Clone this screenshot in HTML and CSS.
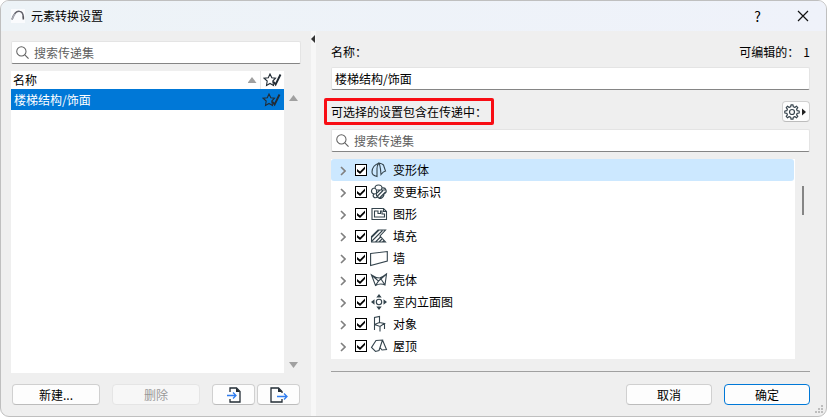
FILE: index.html
```
<!DOCTYPE html>
<html lang="zh-CN">
<head>
<meta charset="utf-8">
<title>元素转换设置</title>
<link rel="stylesheet" href="styles.css">
</head>
<body>
<svg class="defs" aria-hidden="true">
  <symbol id="search" viewBox="0 0 14 14"><circle cx="5.8" cy="5.8" r="5" fill="none" stroke="currentColor" stroke-width="1.1"/><path d="M9.5 9.5l4 4" stroke="currentColor" stroke-width="1.2"/></symbol>
  <symbol id="starcheck" viewBox="0 0 19 14"><path d="M7 1l1.8 3.8 3.7.4-2.7 2.8.7 4.4L7 10.5l-3.5 1.9.7-4.4L1 5.2l4.3-.5z" fill="none" stroke="currentColor" stroke-width="1.1"/><path d="M10.2 8.5l2.4 3L17.5 1.5" fill="none" stroke="currentColor" stroke-width="1.9"/></symbol>
  <symbol id="chevron" viewBox="0 0 6 10"><path d="M1 1l4 4-4 4" fill="none" stroke="currentColor" stroke-width="1.6"/></symbol>
</svg>
<main class="dialog">
  <header class="titlebar">
    <svg class="logo" viewBox="0 0 14 14"><path d="M1 10.500C3 4 6 1.800 8.500 2.200C11.500 2.600 12.200 5 12.300 8.500" fill="none" stroke="#63636c" stroke-width="1.500"/><path d="M1 10.500C2 8 3 6 4 5" fill="none" stroke="#a7a9b2" stroke-width="1.600"/><path d="M12.300 7.500v3" stroke="#54545c" stroke-width="1.600"/></svg>
    <h1>元素转换设置</h1>
    <button class="winbtn" type="button" aria-label="帮助">?</button>
    <button class="winbtn" type="button" aria-label="关闭"><svg viewBox="0 0 12 12" width="12" height="12"><path d="M1 1l10 10M11 1L1 11" stroke="#111" stroke-width="1.200"/></svg></button>
  </header>
  <div class="panes">
    <section class="left">
      <label class="search"><svg><use href="#search"/></svg><input type="search" placeholder="搜索传递集" aria-label="搜索传递集"></label>
      <div class="listwrap">
        <div class="list">
          <table>
            <thead><tr><th scope="col"><span class="sort">名称<i class="up"></i></span></th><th class="flag" scope="col"><svg class="star"><use href="#starcheck"/></svg></th></tr></thead>
            <tbody><tr><td>楼梯结构/饰面</td><td class="flag"><svg class="star"><use href="#starcheck"/></svg></td></tr></tbody>
          </table>
        </div>
        <div class="arrows"><i class="up"></i><i class="down"></i></div>
      </div>
      <div class="actions">
        <button class="btn wide" type="button">新建...</button>
        <button class="btn wide del" type="button" disabled>删除</button>
        <button class="btn import" type="button" aria-label="导入"><svg viewBox="0 0 18 16" width="18" height="16"><path d="M5 5V1h6.500l3.500 3.500V15H5v-3" fill="none" stroke="#222c35" stroke-width="1.300"/><path d="M11 1v4h4z" fill="#222c35"/><path d="M2 8.500h9M8 5.500l3 3-3 3" fill="none" stroke="#2f7df0" stroke-width="1.300"/></svg></button>
        <button class="btn export" type="button" aria-label="导出"><svg viewBox="0 0 18 16" width="18" height="16"><path d="M12 12v3H1V1h7.500L12 4.500V6" fill="none" stroke="#222c35" stroke-width="1.300"/><path d="M8 1v4h4z" fill="#222c35"/><path d="M7 9.500h10M14 6.500l3 3-3 3" fill="none" stroke="#2f7df0" stroke-width="1.300"/></svg></button>
      </div>
    </section>
    <div class="splitter"><i></i></div>
    <section class="right">
      <div class="line"><label for="name">名称：</label><span class="editable">可编辑的：<b>1</b></span></div>
      <input class="field" id="name" type="text" value="楼梯结构/饰面">
      <div class="line options">
        <h2>可选择的设置包含在传递中：</h2>
        <button class="btn gear" type="button" aria-label="选项"><svg viewBox="0 0 24 16" width="24" height="16"><path d="M6.700 2.800L7 .800H9L9.300 2.800L10.800 3.400L12.400 2.200L13.800 3.600L12.600 5.200L13.200 6.700L15.200 7V9L13.200 9.300L12.600 10.800L13.800 12.400L12.400 13.800L10.800 12.600L9.300 13.200L9 15.200H7L6.700 13.200L5.200 12.600L3.600 13.800L2.200 12.400L3.400 10.800L2.800 9.300L.800 9V7L2.800 6.700L3.400 5.200L2.200 3.600L3.600 2.200L5.200 3.400z" fill="none" stroke="#37444d" stroke-width="1.200" stroke-linejoin="round"/><circle cx="8" cy="8" r="2.500" fill="none" stroke="#37444d" stroke-width="1.200"/><path d="M18 4.500v7l4-3.500z" fill="#222"/></svg></button>
      </div>
      <label class="search"><svg><use href="#search"/></svg><input type="search" placeholder="搜索传递集" aria-label="搜索设置"></label>
      <div class="treewrap">
        <ul class="tree">
          <li class="current"><button type="button" aria-label="展开"><svg><use href="#chevron"/></svg></button><label><input type="checkbox" checked><svg class="icon" viewBox="0 0 18 18"><path d="M9 2C5 3.500 2 7 2 11C2 13.500 4.500 15 7 15.500V7.500C7 5.500 7.500 3.500 9 2zM9 2C11 2.500 12.500 3 13.500 4L15.500 10C13.500 10.500 12.500 11.500 11 13.500C10.500 9 10.500 5 9 2z"/></svg>变形体</label></li>
          <li><button type="button" aria-label="展开"><svg><use href="#chevron"/></svg></button><label><input type="checkbox" checked><svg class="icon" viewBox="0 0 18 18"><path d="M5 5C5 1 12 1 12 5C16 4 18 9 14 11C14 15 9 17 8 14C4 16 2 13 4 11C0 10 1 5 5 5zM5 5L6.500 7H15.500M6.500 7V13.500M7 10L10 7M7 13.500L13 7.500M9.500 15L15.500 9M4 11L6.500 10.500M12 5L11 7"/></svg>变更标识</label></li>
          <li><button type="button" aria-label="展开"><svg><use href="#chevron"/></svg></button><label><input type="checkbox" checked><svg class="icon" viewBox="0 0 18 18"><path d="M2 14.500V3.500H13.500L16.500 6.500V14.500zM13.500 3.500V6.500H16.500M4.500 12V6H8V8.500H10.500V6H12V9H14.500V12z"/></svg>图形</label></li>
          <li><button type="button" aria-label="展开"><svg><use href="#chevron"/></svg></button><label><input type="checkbox" checked><svg class="icon" viewBox="0 0 18 18"><path d="M15.500 3H8L1.500 9.500V15H15.500L10 9zM2 14L12.500 3.500M5.500 15L11 9.500M1.500 10.500L9 3M9 15L12 12M12.500 15L14 13.500"/></svg>填充</label></li>
          <li><button type="button" aria-label="展开"><svg><use href="#chevron"/></svg></button><label><input type="checkbox" checked><svg class="icon" viewBox="0 0 18 18"><path d="M.600 4.500L17.300 2.500V12L.600 16.500z"/></svg>墙</label></li>
          <li><button type="button" aria-label="展开"><svg><use href="#chevron"/></svg></button><label><input type="checkbox" checked><svg class="icon" viewBox="0 0 18 18"><path d="M1.500 4C5 6.500 7.500 7 9.500 7C12 6.500 14 5 16.500 3L15 14C12 12.500 9 12.500 5.500 14.500zM1.500 4L8.500 10L5.500 14.500M16.500 3L8.500 10M11 8L15 14"/></svg>壳体</label></li>
          <li><button type="button" aria-label="展开"><svg><use href="#chevron"/></svg></button><label><input type="checkbox" checked><svg class="icon" viewBox="0 0 18 18"><circle cx="9" cy="9" r="2.700"/><path class="solid" d="M9 1l2.700 3.500H6.300zM9 17l2.700-3.500H6.300zM1 9l3.500-2.700v5.400zM17 9l-3.500-2.700v5.400z"/></svg>室内立面图</label></li>
          <li><button type="button" aria-label="展开"><svg><use href="#chevron"/></svg></button><label><input type="checkbox" checked><svg class="icon" viewBox="0 0 18 18"><path d="M4.500 15V2.500L9.500 1.500V7.500L4.500 9.500M4.500 9.500L10 11.500L14.500 8.500L9.500 7.500M10 11.500V16.500M14.500 8.500V14"/></svg>对象</label></li>
          <li><button type="button" aria-label="展开"><svg><use href="#chevron"/></svg></button><label><input type="checkbox" checked><svg class="icon" viewBox="0 0 18 18"><path d="M6 3.500L12.500 3L9 13.500L5.500 14.500L1.500 10.500zM12.500 3L16.500 12.500L12 13L10 10.500"/></svg>屋顶</label></li>
        </ul>
        <div class="thumb"></div>
      </div>
      <footer><button class="btn" type="button">取消</button><button class="btn primary" type="button">确定</button></footer>
    </section>
  </div>
  <svg class="grip" viewBox="0 0 9 9"><path d="M6 0h2v2H6zM3 3h2v2H3zM6 3h2v2H6zM0 6h2v2H0zM3 6h2v2H3zM6 6h2v2H6z" fill="#bdbdbd"/></svg>
</main>
</body>
</html>
```
FILE: styles.css
```
* { box-sizing: border-box; }
body { margin: 0; background: #fff; }
body, button, input { font: 12px/18px "Noto Sans CJK SC", sans-serif; color: #000; }
h1, h2, ul { margin: 0; padding: 0; font-size: 12px; font-weight: 400; list-style: none; }
svg { flex: none; display: block; }
.defs { position: absolute; width: 0; height: 0; }

.dialog {
  position: relative;
  display: flex;
  flex-direction: column;
  height: 100vh;
  border: 1px solid #bfbfbf;
  border-radius: 9px;
  background: #efefef;
  overflow: hidden;
}
.titlebar {
  display: flex;
  align-items: center;
  height: 30px;
  padding: 0 1px 0 10px;
  background: linear-gradient(90deg, #edf3f7, #eff2fa);
}
.logo { width: 14px; height: 14px; margin-right: 6px; background: #fafbfd; }
.titlebar h1 { flex: 1; }
.winbtn {
  display: flex;
  align-items: center;
  justify-content: center;
  width: 45px;
  height: 30px;
  padding: 0;
  border: 0;
  background: none;
  font-size: 14px;
}

.panes { flex: 1; display: flex; min-height: 0; }
.left { display: flex; flex-direction: column; width: 310px; padding: 10px 10px 11px; }
.splitter { width: 5px; background: #f7f7f7; }
.splitter i {
  display: block;
  width: 4px;
  height: 8px;
  margin-top: 4px;
  background: #333;
  clip-path: polygon(0 50%, 100% 0, 100% 100%);
}
.right { flex: 1; display: flex; flex-direction: column; min-width: 0; padding: 12px 16px 11px 15px; }

.search {
  display: flex;
  align-items: center;
  gap: 5px;
  flex: none;
  height: 23px;
  padding: 0 4px;
  border: 1px solid #e4e4e4;
  border-bottom-color: #858585;
  border-radius: 2px;
  background: #fff;
}
.search svg { width: 13px; height: 13px; color: #606060; }
.search input { flex: 1; min-width: 0; height: 20px; padding: 0; border: 0; outline: 0; background: none; }
.search input::placeholder { color: #606060; opacity: 1; }

.listwrap { flex: 1; display: flex; min-height: 0; margin-top: 7px; }
.list { flex: 1; background: #fff; }
.list table { width: 100%; border-collapse: collapse; }
.list th, .list td { height: 18px; padding: 0 3px 0 2px; font-weight: 400; text-align: left; }
.list .flag { width: 24px; padding: 0 2px; }
.list th.flag { border-left: 1px solid #e8e8e8; }
.list tbody { background: #0078d7; color: #fff; }
.list td { height: 21px; padding-left: 3px; }
.star { width: 19px; height: 14px; color: #222c35; }
.sort { display: flex; align-items: center; justify-content: space-between; }
.up, .down { width: 9px; height: 6px; background: #a0a0a0; clip-path: polygon(50% 0, 100% 100%, 0 100%); }
.down { clip-path: polygon(0 0, 100% 0, 50% 100%); }
.arrows { display: flex; flex-direction: column; justify-content: space-between; width: 17px; padding: 24px 3px 5px 5px; }

.btn {
  display: flex;
  align-items: center;
  justify-content: center;
  width: 86px;
  height: 21px;
  padding: 0;
  border: 1px solid #d0d0d0;
  border-bottom-color: #bcbcbc;
  border-radius: 4px;
  background: #fdfdfd;
}
.actions { display: flex; margin-top: 11px; padding-left: 1px; }
.wide { width: 88px; }
.del { margin: 0 12px; }
.btn:disabled { border-color: #e5e5e5; background: #f7f7f7; color: #999; }
.import, .export { width: 43px; }
.export { margin-left: 2px; }

.line { display: flex; align-items: center; justify-content: space-between; height: 18px; }
.editable b { margin-left: 4px; font-weight: 400; }
.field {
  width: 100%;
  height: 23px;
  margin-top: 6px;
  padding: 0 3px;
  border: 1px solid #e4e4e4;
  border-bottom-color: #858585;
  border-radius: 2px;
  background: #fff;
}
.options { height: 27px; margin: 8px 0 4px -7px; }
.options h2 { height: 27px; padding: 0 4px; border: 3px solid #f80d14; border-radius: 2px; line-height: 21px; white-space: nowrap; }
.gear { width: 28px; }

.treewrap { flex: 1; display: flex; min-height: 0; margin-top: 7px; }
.tree { flex: 1; background: #fff; overflow: hidden; padding-right: 1px; }
.tree li { display: flex; align-items: center; height: 22px; padding-left: 9px; }
.tree .current { border-radius: 3px; background: #cce8ff; }
.tree button { width: 15px; height: 22px; padding: 2px 0 0; border: 0; background: none; }
.tree button svg { width: 6px; height: 10px; color: #808080; }
.tree label { display: flex; align-items: center; }
.tree input { appearance: none; display: grid; place-items: center; width: 12px; height: 12px; margin: 0 3px 0 0; border: 1px solid #000; background: #fff; }
.tree input:checked::before {
  content: "";
  width: 8px;
  height: 8px;
  background: #000;
  clip-path: polygon(0 38%, 38% 68%, 100% 6%, 100% 36%, 38% 100%, 0 68%);
}
.icon { width: 18px; height: 18px; margin-right: 5px; fill: none; stroke: #34444d; stroke-width: 1.1; }
.icon .solid { fill: #34444d; stroke: none; }
.thumb { width: 2px; height: 29px; margin: 27px 6px 0 7px; background: #858585; }

footer { display: flex; justify-content: flex-end; gap: 12px; margin-top: 12px; padding-top: 12px; border-top: 1px solid #a0a0a0; }
.primary { border-color: #0078d7; }
.grip { position: absolute; right: 2px; bottom: 2px; width: 9px; height: 9px; }
```
